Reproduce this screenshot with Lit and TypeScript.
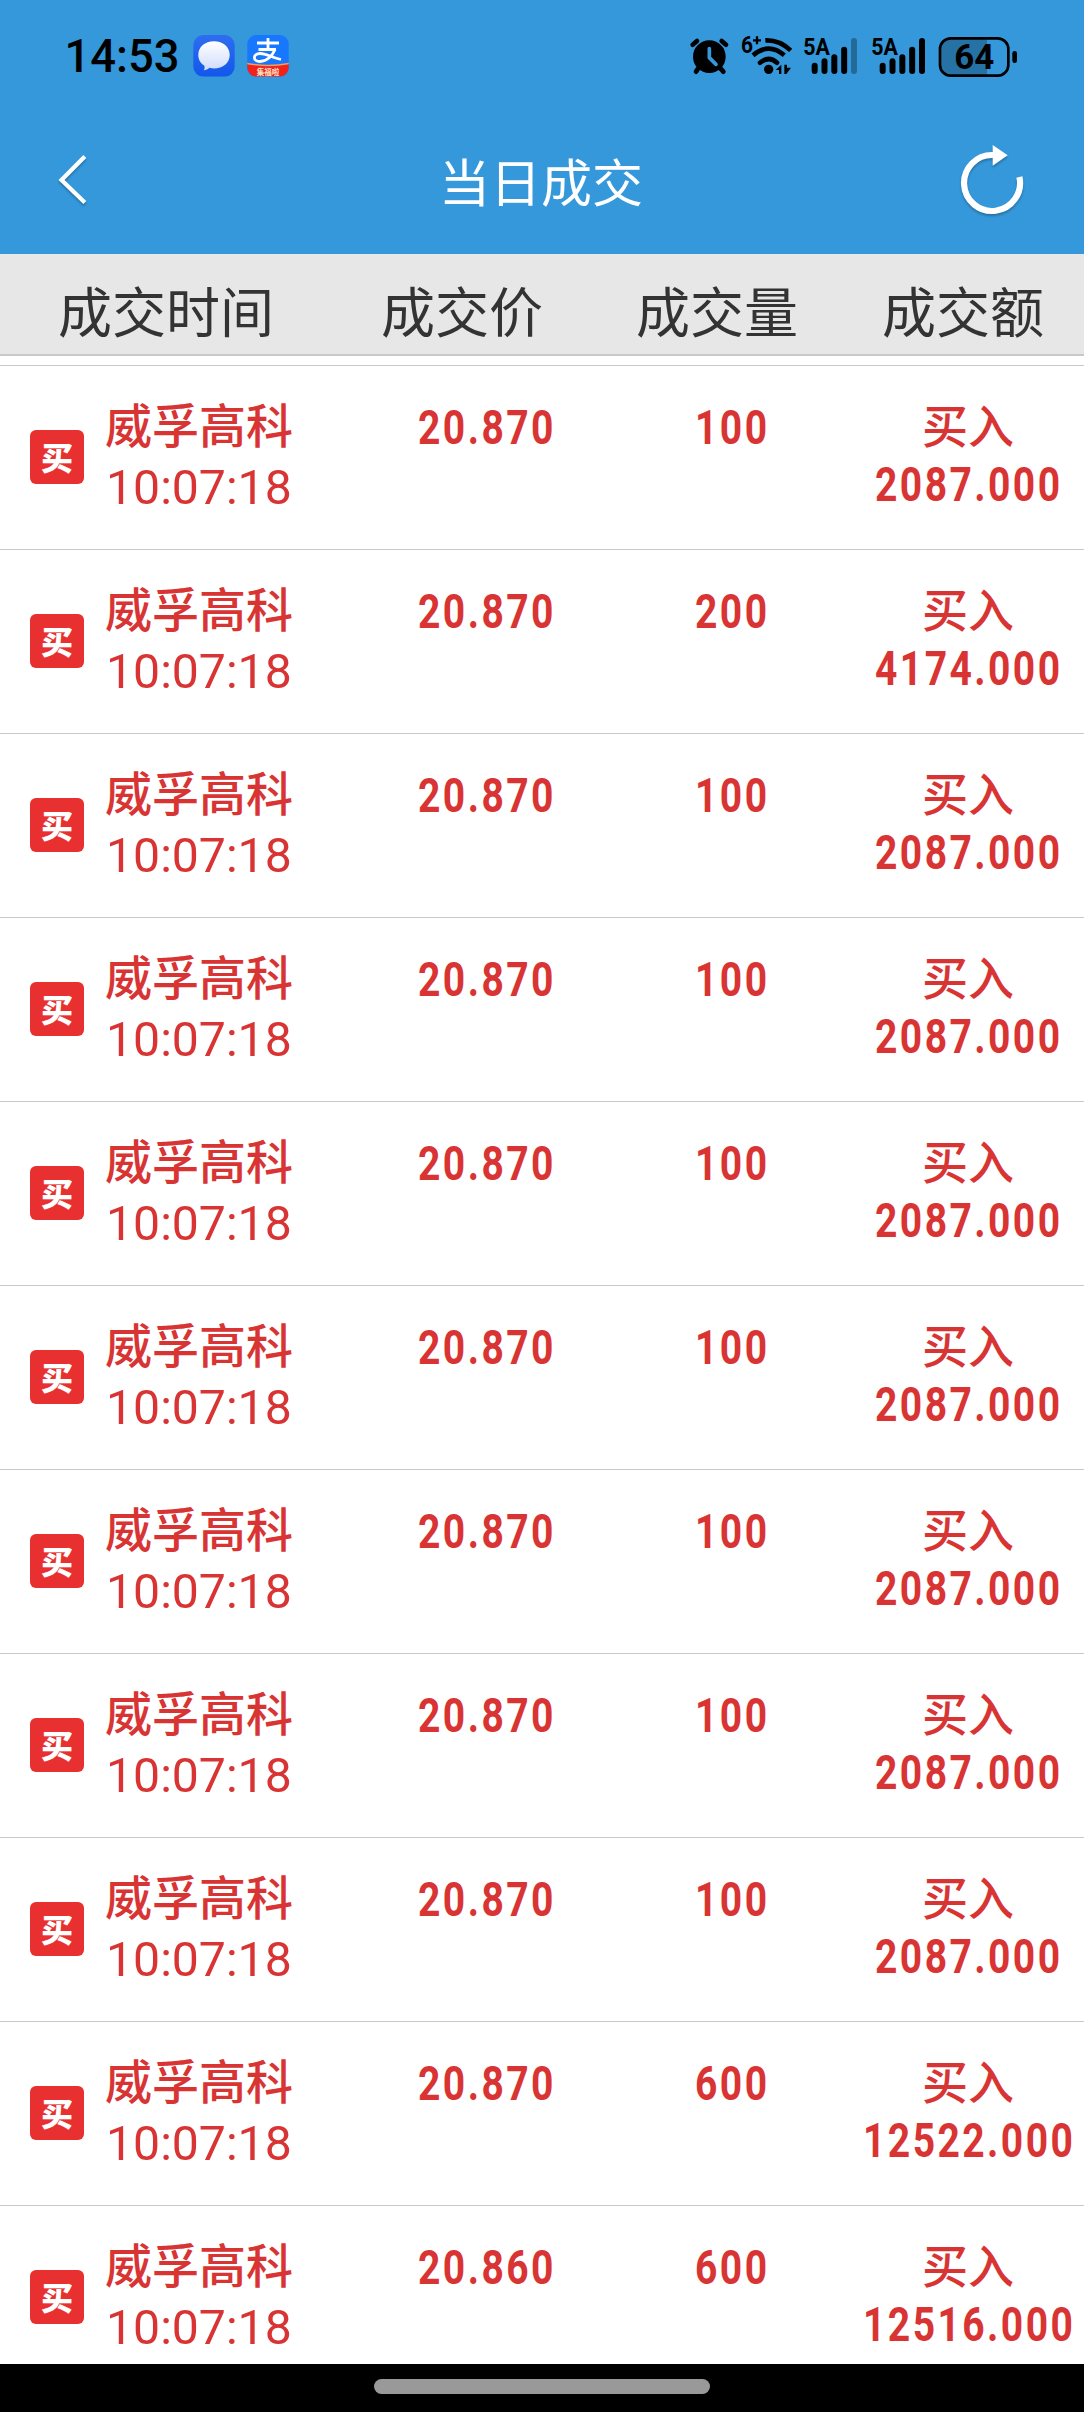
import { LitElement, html, css, svg } from "lit";
import { customElement, property } from "lit/decorators.js";

interface Trade {
  name: string;
  time: string;
  price: string;
  qty: string;
  side: string;
  amount: string;
}

const trade = (qty: string, amount: string, price = "20.870"): Trade => ({
  name: "威孚高科",
  time: "10:07:18",
  price,
  qty,
  side: "买入",
  amount,
});

const TRADES: Trade[] = [
  trade("100", "2087.000"),
  trade("200", "4174.000"),
  ...Array.from({ length: 7 }, () => trade("100", "2087.000")),
  trade("600", "12522.000"),
  trade("600", "12516.000", "20.860"),
];

/* Condensed numerals: pitch and punct are the drawn advances, scale squeezes the glyphs sideways. */
const figures = (
  text: string,
  cls: string,
  pitch: number,
  punct: number,
  scale: number,
  height: number,
  baseline: number,
) => {
  const width = [...text].reduce((w, c) => w + (/\d/.test(c) ? pitch : punct), 0);
  return html`<svg class=${cls} width=${width} height=${height}>
    ${svg`<text x="0" y=${baseline} transform="scale(${scale} 1)">${text}</text>`}
  </svg>`;
};

@customElement("status-bar")
export class StatusBar extends LitElement {
  static styles = css`
    :host {
      display: flex;
      justify-content: space-between;
      height: 112px;
      box-sizing: border-box;
      padding: 20px 44px 0 40px;
      font-family: Roboto, "Noto Sans CJK SC", sans-serif;
    }
    svg { display: block; }
    .clock { font-size: 46px; font-weight: 500; }
    .gen { font-size: 72px; font-weight: 700; }
    .wifi-gen { font-size: 72px; font-weight: 700; }
    .level { font-size: 104px; font-weight: 700; }
    .fu { font-size: 7.500px; font-weight: 700; }
  `;

  private signal(bars: number[], x: number) {
    const tops = [128, 115, 103, 80, 54];
    return svg`
      <text class="gen" x=${x - 2} y="106" textLength="80" lengthAdjust="spacingAndGlyphs">5A</text>
      ${tops.map(
        (t, i) => svg`<rect x=${x + 23 + i * 29.5} y=${t} width="18" height=${162 - t} rx="9" fill-opacity=${bars[i]}/>`,
      )}`;
  }

  render() {
    return html`
      <svg width="280" height="70" viewBox="0 0 280 70">
        <defs>
          <linearGradient id="msg" x1="0" y1="0" x2="0" y2="1">
            <stop offset="0" stop-color="#2f6df0" /><stop offset="1" stop-color="#1257ec" />
          </linearGradient>
          <linearGradient id="bubble" x1="0" y1="0" x2="0" y2="1">
            <stop offset="0" stop-color="#fff" /><stop offset="1" stop-color="#cfdcfb" />
          </linearGradient>
          <clipPath id="tile"><rect x="207.3" y="15" width="41.4" height="41.6" rx="9" /></clipPath>
        </defs>
        <text class="clock" x="24.5" y="51.7" textLength="115" lengthAdjust="spacingAndGlyphs">14:53</text>
        <rect x="153.3" y="15" width="41.4" height="41.6" rx="10" fill="url(#msg)" />
        <path
          d="M174 21.3c9 0 15.7 5.7 15.7 13.6S183 48.4 174 48.4c-1.700 0-3-.2-4.600-.6-1.400 1.300-3.400 2.300-5.600 2.400.8-1.500 1-2.900.6-4.500-3.800-2.400-6.100-6.300-6.100-10.800 0-7.900 6.700-13.600 15.700-13.600z"
          fill="url(#bubble)"
        />
        <g clip-path="url(#tile)">
          <rect x="207" y="15" width="42" height="42" fill="#1777fe" />
          <path d="M207 44q21 4 42 0v14h-42z" fill="#f0231c" />
          <path d="M207 43.500q21 4 42 0" fill="none" stroke="#ff9a52" stroke-width="1.500" />
          <g fill="none" stroke="#fff" stroke-width="2.800">
            <path d="M217 23h22M228 18v11.500M218.500 29.500h17.500" />
            <path d="M235 29.500c-2.500 6-8 12-15 12-7.500 0-7.500-8 0-8 6.500 0 11 4 21 6" />
          </g>
        </g>
        <text class="fu" x="216.700" y="54.500" fill="#ffe6c8">集福啦</text>
      </svg>
      <svg width="370" height="70" viewBox="0 0 1110 210">
        <circle cx="118" cy="110" r="49" />
        <g fill="none" stroke="#000" stroke-width="14" stroke-linecap="round">
          <path d="M68 74l13-11M155 63l13 11M84 146l-6 9M152 146l8 9" />
          <path d="M118 86v27l20 20" stroke="#3498db" stroke-width="11" />
        </g>
        <text class="wifi-gen" x="213" y="98" textLength="36" lengthAdjust="spacingAndGlyphs">6</text>
        <path d="M249 61h24M261 49v24" stroke="#000" stroke-width="7" />
        <g fill="none" stroke="#000" stroke-width="14">
          <path d="M286 61q42-2 76 30" />
          <path d="M249 106q48-40 94 0" />
          <path d="M270 128q26-22 51 0" stroke-linecap="round" />
        </g>
        <circle cx="296" cy="148" r="14" />
        <path d="M317 150l17-16v28h-7v-12zM343 134v28h6l14-19h-12v-9z" />
        ${this.signal([1, 1, 1, 1, 0.3], 402)} ${this.signal([1, 1, 1, 1, 1], 606)}
        <path d="M840 58h111v106H840q-28 0-28-28V86q0-28 28-28z" fill-opacity=".25" />
        <rect x="810" y="55" width="205" height="112" rx="32" fill="none" stroke="#000" stroke-width="8" />
        <text class="level" x="853" y="148" textLength="120" lengthAdjust="spacingAndGlyphs">64</text>
        <rect x="1027" y="93" width="14" height="36" rx="7" />
      </svg>
    `;
  }
}

@customElement("title-bar")
export class TitleBar extends LitElement {
  @property() heading = "";

  static styles = css`
    :host {
      display: flex;
      align-items: center;
      justify-content: space-between;
      height: 142px;
      box-sizing: border-box;
      padding: 0 50px 0 48px;
      color: #fff;
      font-family: "Noto Sans CJK SC", sans-serif;
    }
    svg { display: block; width: 80px; height: 90px; filter: drop-shadow(0 2px 1px rgba(0, 0, 0, 0.25)); }
    .heading { margin: 0; padding-bottom: 6px; font-size: 51px; line-height: 60px; font-weight: 400; }
  `;

  render() {
    return html`
      <svg viewBox="0 0 80 90">
        <path d="M36.800 18.500L13.500 42l23.300 22.500" fill="none" stroke="#fff" stroke-width="4.200" />
      </svg>
      <h1 class="heading">${this.heading}</h1>
      <svg viewBox="0 0 80 90">
        <path d="M39 17A28 28 0 1 0 65.400 39" fill="none" stroke="#fff" stroke-width="6.200" />
        <path d="M38.700 7l15 10.200-15 10.500z" fill="#fff" />
      </svg>
    `;
  }
}

@customElement("trade-row")
export class TradeRow extends LitElement {
  @property({ attribute: false }) trade!: Trade;

  static styles = css`
    :host {
      display: grid;
      grid-template-columns: 364px 246px 244px 230px;
      height: 184px;
      box-sizing: border-box;
      border-top: 1px solid #c8c8c8;
      padding-top: 29px;
      color: #d93434;
      font-family: "Noto Sans CJK SC", sans-serif;
      font-size: 47px;
      line-height: 56px;
    }
    svg { display: block; overflow: visible; fill: currentColor; font-family: Roboto, sans-serif; }
    .stock { display: flex; padding-left: 30px; gap: 21px; }
    .badge {
      width: 54px;
      height: 54px;
      margin-top: 35px;
      border-radius: 6px;
      background: #e83030;
      color: #fff;
      font-size: 32px;
      font-weight: 900;
      line-height: 52px;
      text-align: center;
    }
    .name { font-weight: 500; white-space: nowrap; }
    .cell { display: flex; flex-direction: column; align-items: center; }
    .side { font-size: 46px; font-weight: 500; padding-right: 2px; }
    .time { font-size: 49px; font-weight: 400; margin-left: 1px; }
    .num { font-size: 47.800px; font-weight: 700; letter-spacing: 3px; }
  `;

  render() {
    const t = this.trade;
    return html`
      <div class="stock">
        <div class="badge">买</div>
        <div>
          <div class="name">${t.name}</div>
          ${figures(t.time, "time", 27.1, 11.7, 0.983, 60, 53)}
        </div>
      </div>
      <div class="cell">${figures(t.price, "num", 24.9, 13.4, 0.816, 56, 49)}</div>
      <div class="cell">${figures(t.qty, "num", 24.9, 13.4, 0.816, 56, 49)}</div>
      <div class="cell">
        <div class="side">${t.side}</div>
        ${figures(t.amount, "num", 24.9, 13.4, 0.816, 56, 49.7)}
      </div>
    `;
  }
}

@customElement("app-root")
export class AppRoot extends LitElement {
  static styles = css`
    :host {
      display: flex;
      flex-direction: column;
      height: 2412px;
      background: #fff;
      font-family: "Noto Sans CJK SC", sans-serif;
    }
    .top { background: #3498db; height: 254px; flex: none; }
    .columns {
      display: grid;
      grid-template-columns: 332px 260px 250px 242px;
      flex: none;
      height: 102px;
      box-sizing: border-box;
      padding-top: 26px;
      border-bottom: 2px solid #c8c8c8;
      background: #e7e7e7;
      color: #333;
      font-size: 54px;
      line-height: 60px;
      text-align: center;
    }
    .list { flex: 1; min-height: 0; overflow: hidden; padding-top: 9px; }
    .nav { display: flex; flex: none; height: 48px; background: #000; justify-content: center; }
    .handle { width: 336px; height: 15px; margin-top: 15px; border-radius: 8px; background: #999; }
  `;

  render() {
    return html`
      <div class="top">
        <status-bar></status-bar>
        <title-bar heading="当日成交"></title-bar>
      </div>
      <div class="columns">
        <span>成交时间</span><span>成交价</span><span>成交量</span><span>成交额</span>
      </div>
      <div class="list">${TRADES.map((t) => html`<trade-row .trade=${t}></trade-row>`)}</div>
      <div class="nav"><div class="handle"></div></div>
    `;
  }
}
